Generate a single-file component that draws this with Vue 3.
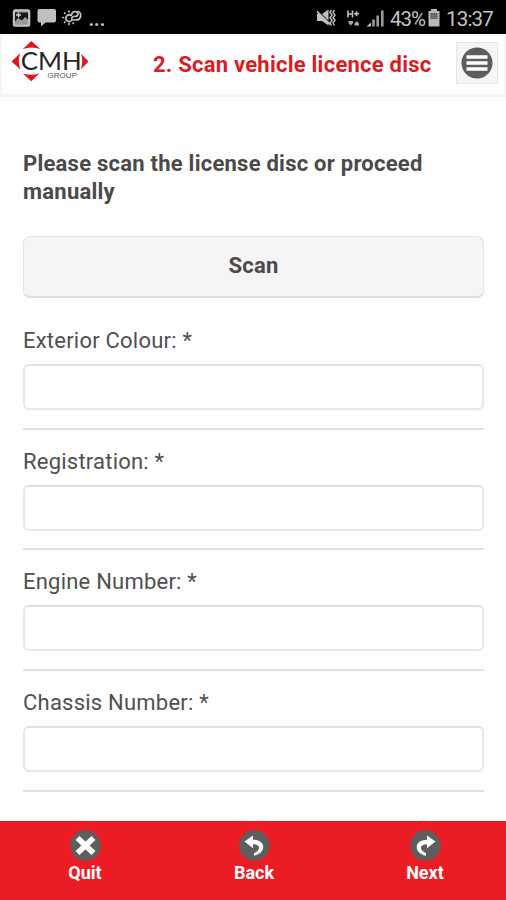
<script setup>
const fields = ['Exterior Colour: *', 'Registration: *', 'Engine Number: *', 'Chassis Number: *']
</script>

<template>
  <div class="screen">
    <div class="status">
      <svg class="status-left" width="110" height="34" viewBox="0 0 110 34">
        <rect x="13.800" y="10.300" width="15.500" height="15.500" rx="1.500" fill="#9a9a9a" stroke="#c4c4c4" stroke-width="2" />
        <path d="M15 12.500h13v7l-3-2.500-3 3.500-4-2.500-3 3.500z" fill="#161616" />
        <path d="M18.500 12.500v5M16 15h5" stroke="#ccc" stroke-width="1.500" />
        <path d="M39.500 9h14.500q2 0 2 2v9.500q0 2-2 2H45.500l-4.500 4v-4h-1.500q-2 0-2-2V11Q37.500 9 39.500 9z" fill="#c0c0c0" />
        <g fill="none" stroke="#c4c4c4" stroke-width="1.700" stroke-linecap="round">
          <path d="M71.500 20.500a3.300 3.300 0 1 1-.5-5" />
          <path d="M69 11v.8M64.500 13l.5.500M62.800 17.500h.5M64.500 22.500l.5-.5M69 24.500v-.8M73 23l.5.500" />
          <path d="M71.500 15q.5-3.500 3.500-3.500 2 0 3 2.500M77.500 11.500q3.500.5 3.200 4.500-.7 4-4.700 4h-3q-2-.7-1-2.500 1-1.500 3.500-1.200 2.500 0 2.500-2.500" />
        </g>
        <g fill="#bbb"><circle cx="91.300" cy="24.500" r="1.600" /><circle cx="96.700" cy="24.500" r="1.600" /><circle cx="102.500" cy="24.500" r="1.600" /></g>
      </svg>
      <div class="status-right">
        <svg width="70" height="34" viewBox="316 0 70 34">
          <path d="M317 14h5l6.500-4.500v16l-6.500-4.500h-5z" fill="#c0c0c0" />
          <path d="M317 10l14 14" stroke="#000" stroke-width="1.200" />
          <path d="M317 11.300l13 13" stroke="#c0c0c0" stroke-width="1.800" />
          <path d="M331.500 10l-1.500 2.500 2 2.500-2 2.700 2 2.600-2 2.600 1.500 2.600M334.500 10l-1.500 2.500 2 2.500-2 2.700 2 2.600-2 2.600 1.500 2.600" fill="none" stroke="#b9b9b9" stroke-width="1.500" />
          <path d="M348 10.500v7M352.500 10.500v7M348 14h4.500M354 13.800h5M356.500 11.300v5" stroke="#c4c4c4" stroke-width="1.600" />
          <path d="M348.500 21h4.500v2l-2.200 2.500-2.300-2.500zM354.500 25.500h4.500v-2l-2.200-2.500-2.300 2.500z" fill="#a8a8a8" />
          <path d="M366.500 26.500l4.500-4v4z" fill="#c4c4c4" />
          <path d="M373.500 26.500v-7M377.700 26.500V15.500M382.300 26.500V10.500" stroke="#999" stroke-width="2.600" />
        </svg>
        <span class="percent">43%</span>
        <svg class="battery" width="14" height="34" viewBox="427 0 14 34">
          <path d="M431 9h6v2h2.500v15.500h-11V11h2.500z" fill="#b9b9b9" />
          <path d="M430.500 13h7v6h-7z" fill="#555" />
          <path d="M430.500 15h7M430.500 17.500h7M433 13v6M435.500 13v6" stroke="#888" stroke-width=".7" />
        </svg>
        <span class="clock">13:37</span>
      </div>
    </div>

    <header class="header">
      <svg class="logo" width="80" height="42" viewBox="10 40 80 42">
        <g fill="#e4141e">
          <path d="M31.300 41l9 8q-8.500-3-17.500 0z" />
          <path d="M11.500 61.500l9-8.500q-3.500 8 0 16.500z" />
          <path d="M31.300 81.300l-8.500-7.800q8.500 2.700 16.500 0z" />
          <path d="M88.500 61.500l-7.500-7.700q2.500 7.700 0 15.400z" />
        </g>
        <text x="20.800" y="69.800" font-family="Lato, sans-serif" font-size="25.500" textLength="61" lengthAdjust="spacingAndGlyphs" fill="#262626">CMH</text>
        <text x="47.500" y="77.600" font-family="Liberation Sans, sans-serif" font-size="7.800" textLength="29.500" lengthAdjust="spacingAndGlyphs" fill="#555">GROUP</text>
      </svg>
      <h1 class="title">2. Scan vehicle licence disc</h1>
      <button class="menu" aria-label="Menu">
        <svg width="32" height="32" viewBox="0 0 32 32">
          <circle cx="16" cy="16" r="15.500" fill="#5d5d5d" />
          <path d="M5.500 10h21M5.500 16h21M5.500 22h21" stroke="#fff" stroke-width="3.500" />
        </svg>
      </button>
    </header>

    <main class="content">
      <p class="lead">Please scan the license disc or proceed<br>manually</p>
      <button class="scan">Scan</button>
      <div v-for="(label, i) in fields" :key="label" class="field">
        <label :for="'field' + i">{{ label }}</label>
        <input :id="'field' + i" type="text">
      </div>
    </main>

    <footer class="footer">
      <button class="action">
        <svg width="31" height="31" viewBox="0 0 31 31">
          <circle cx="15.500" cy="15.500" r="15.200" fill="#5e5e5e" />
          <path d="M7.500 8l16 15M23.500 8l-16 15" stroke="#fff" stroke-width="5.800" />
        </svg>
        <span>Quit</span>
      </button>
      <button class="action">
        <svg width="31" height="31" viewBox="0 0 31 31">
          <circle cx="15.500" cy="15.500" r="15.200" fill="#5e5e5e" />
          <path d="M5.500 11.500l8.500-6v4.200c13.500.3 13.500 13.300 1 16v-2.500c7.500-3.500 6.500-9-1-9v4z" fill="#fff" />
        </svg>
        <span>Back</span>
      </button>
      <button class="action">
        <svg width="31" height="31" viewBox="0 0 31 31">
          <circle cx="15.500" cy="15.500" r="15.200" fill="#5e5e5e" />
          <path d="M25.500 11.500l-8.500-6v4.200c-13.500.3-13.500 13.300-1 16v-2.500c-7.500-3.500-6.500-9 1-9v4z" fill="#fff" />
        </svg>
        <span>Next</span>
      </button>
    </footer>
  </div>
</template>

<style>
body { margin: 0; background: #fff; }
</style>

<style scoped>
* { box-sizing: border-box; }
.screen {
  width: 506px;
  height: 900px;
  display: flex;
  flex-direction: column;
  overflow: hidden;
  background: #fefefe;
  color: #4a4a4a;
  font-family: Roboto, "Liberation Sans", sans-serif;
}
button { font-family: inherit; margin: 0; }
svg { display: block; flex: none; }
.status {
  height: 34px;
  flex: none;
  display: flex;
  justify-content: space-between;
  background: #000;
  color: #c4c4c4;
}
.status-right { width: 190px; display: flex; }
.percent { width: 37px; margin-left: 4px; font-size: 20.500px; line-height: 38px; letter-spacing: -1px; white-space: nowrap; }
.clock { margin-left: 5px; font-size: 20.500px; line-height: 38px; letter-spacing: -.8px; }
.header {
  height: 63px;
  flex: none;
  display: flex;
  align-items: flex-start;
  padding: 7px 8px 0 10px;
  border: solid #f5f5f5;
  border-width: 1px 2px 3px;
  background: #fff;
}
.logo { margin-left: -2px; margin-top: -2px; }
.title {
  width: 279px;
  margin: 9px 0 0 63px;
  color: #dc1b22;
  font-size: 22px;
  line-height: 28px;
  font-weight: 700;
  letter-spacing: .24px;
  white-space: nowrap;
}
.menu {
  width: 42px;
  height: 42px;
  margin-left: auto;
  margin-right: -2px;
  padding: 0;
  display: grid;
  place-items: center;
  border: 1px solid #e6e6e6;
  background: #f5f5f5;
}
.content { flex: 1; padding: 53px 22px 0 23px; }
.lead {
  margin: 0 0 30px;
  font-size: 22px;
  line-height: 28px;
  font-weight: 700;
  letter-spacing: .24px;
  white-space: nowrap;
}
.scan {
  display: block;
  width: 100%;
  height: 62px;
  padding: 0 0 2px;
  border: 1px solid #e4e4e4;
  border-bottom: 2px solid #dcdcdc;
  border-radius: 7px;
  background: #f5f5f5;
  color: #4a4a4a;
  font-size: 22px;
  font-weight: 700;
  letter-spacing: .2px;
}
.field {
  height: 120.7px;
  padding-top: 18px;
  display: flex;
  flex-direction: column;
}
.scan + .field { height: 131.5px; padding-top: 29px; }
.field::after { content: ""; height: 2px; margin-top: auto; background: #e1e1e1; }
label { font-size: 22px; line-height: 28px; letter-spacing: .22px; color: #505050; }
input {
  width: 100%;
  height: 46px;
  margin-top: 9px;
  border: 2px solid #e8e8e8;
  border-top-color: #e0e0e0;
  border-radius: 6px;
  background: #fff;
}
.footer {
  height: 79px;
  flex: none;
  display: grid;
  grid-template-columns: 170px 168px 1fr;
  background: #ec1c24;
  border-top: 1px solid #d82128;
}
.action {
  display: flex;
  flex-direction: column;
  align-items: center;
  padding: 8px 0 0;
  border: 0;
  background: none;
  color: #fff;
  font-size: 18px;
  line-height: 24px;
  font-weight: 700;
}
.action:last-child { padding-left: 6px; }
</style>
